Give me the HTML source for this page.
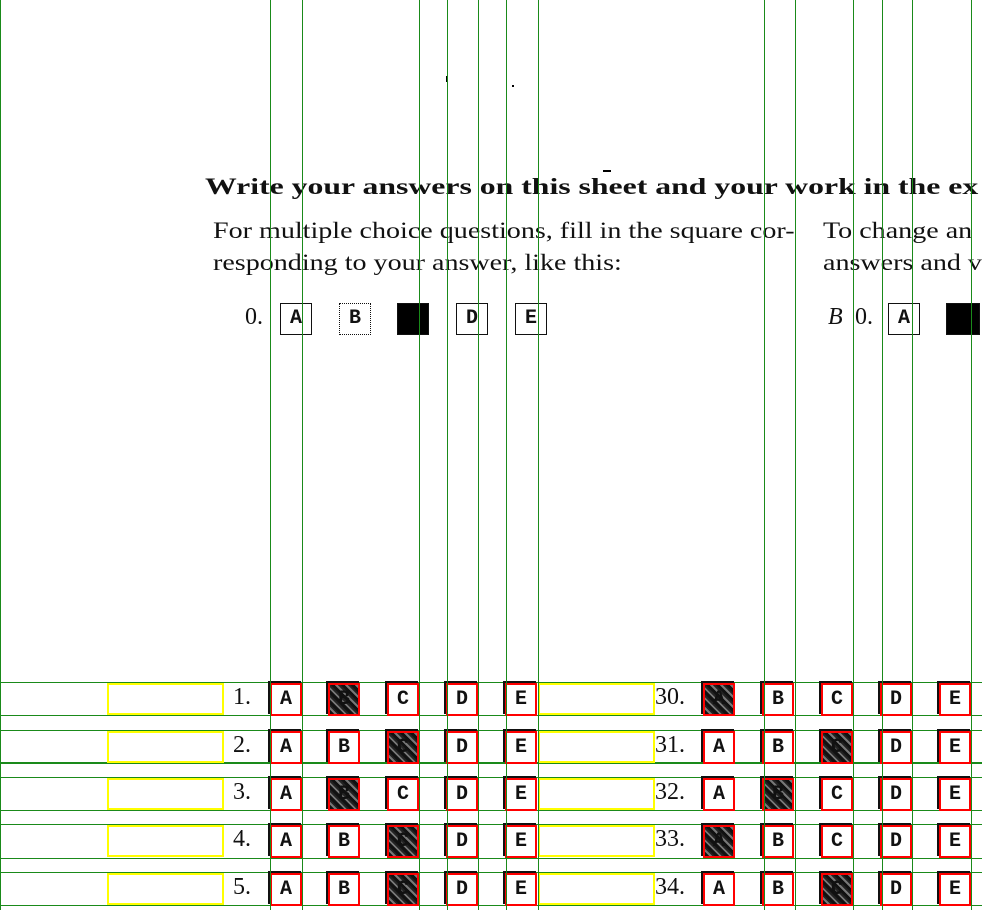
<!DOCTYPE html>
<html><head><meta charset="utf-8"><style>
body{margin:0;width:982px;height:910px;background:#fff;position:relative;overflow:hidden;font-family:"Liberation Serif",serif;}
div{position:absolute;box-sizing:border-box;}
.v{width:1px;top:0;height:910px;background:#1a8a1a;}
.h{height:1px;left:0;width:982px;background:#1a8a1a;}
.t{white-space:nowrap;color:#111;}
.s{transform-origin:0 0;}
.bx{width:32px;height:32px;border:1.5px solid #111;font-family:"Liberation Mono",monospace;font-size:20px;font-weight:bold;text-align:center;line-height:29px;color:#111;}
.sh{width:33px;height:33px;border:2px solid #111;border-top-width:3px;border-bottom-width:3px;}
.r{width:32px;height:33px;border:2px solid #f00;font-family:"Liberation Mono",monospace;font-size:20px;font-weight:bold;text-align:center;line-height:29px;color:#111;}
.f{background:repeating-linear-gradient(45deg,#111 0 3px,#777 3px 5px,#222 5px 7px);}
.y{border:2px solid #ffff00;width:117px;height:32px;}
.n{font-size:24px;color:#111;}
#clip{left:0;top:0;width:982px;height:910px;overflow:hidden;}
</style></head><body>
<div id="clip">
<div class="t" style="left:446px;top:76px;width:2px;height:6px;background:#000"></div>
<div class="t" style="left:512px;top:85px;width:2px;height:2px;background:#000"></div>
<div class="t" style="left:603px;top:170px;width:8px;height:2px;background:#000"></div>

<div class="t s" style="left:205px;top:174px;font-size:23px;font-weight:bold;transform:scaleX(1.38);">Write your answers on this sheet and your work in the ex</div>
<div class="t s" style="left:213px;top:218px;font-size:23px;transform:scaleX(1.22);">For multiple choice questions, fill in the square cor-</div>
<div class="t s" style="left:213px;top:250px;font-size:23px;transform:scaleX(1.22);">responding to your answer, like this:</div>
<div class="t s" style="left:823px;top:218px;font-size:23px;transform:scaleX(1.22);">To change an</div>
<div class="t s" style="left:823px;top:250px;font-size:23px;transform:scaleX(1.22);">answers and v</div>

<div class="t" style="left:245px;top:304px;font-size:24px;">0.</div>
<div class="bx" style="left:280px;top:303px;">A</div>
<div class="bx" style="left:339px;top:303px;border-style:dotted;">B</div>
<div class="bx" style="left:397px;top:303px;background:#000;"></div>
<div class="bx" style="left:456px;top:303px;">D</div>
<div class="bx" style="left:515px;top:303px;">E</div>
<div class="t" style="left:828px;top:304px;font-size:24px;font-style:italic;">B</div>
<div class="t" style="left:855px;top:304px;font-size:24px;">0.</div>
<div class="bx" style="left:888px;top:303px;">A</div>
<div class="bx" style="left:946px;top:303px;width:34px;background:#000;"></div>

<div class="h" style="top:682px"></div><div class="h" style="top:715px"></div>
<div class="h" style="top:730px"></div><div class="h" style="top:762px;height:2px"></div>
<div class="h" style="top:777px"></div><div class="h" style="top:810px"></div>
<div class="h" style="top:824px"></div><div class="h" style="top:858px"></div>
<div class="h" style="top:872px"></div><div class="h" style="top:905px"></div>

<div id="rows"></div>
<div class="v" style="left:0"></div>
<div class="v" style="left:270px"></div><div class="v" style="left:302px"></div>
<div class="v" style="left:419px"></div><div class="v" style="left:447px"></div>
<div class="v" style="left:478px"></div><div class="v" style="left:506px"></div>
<div class="v" style="left:538px"></div><div class="v" style="left:764px"></div>
<div class="v" style="left:795px"></div><div class="v" style="left:853px"></div>
<div class="v" style="left:882px"></div><div class="v" style="left:912px"></div>
<div class="v" style="left:971px"></div>
</div>
<script>
var tops=[683,731,778,825,873];
var L=[["1.","B"],["2.","C"],["3.","B"],["4.","C"],["5.","C"]];
var R=[["30.","A"],["31.","C"],["32.","B"],["33.","A"],["34.","C"]];
var lx=[270,328,387,446,505], rx=[703,762,821,880,939], letters="ABCDE";
var h="";
for(var i=0;i<5;i++){
 var y=tops[i];
 h+='<div class="y" style="left:107px;top:'+y+'px"></div>';
 h+='<div class="y" style="left:538px;top:'+y+'px"></div>';
 h+='<div class="t n" style="left:233px;top:'+(y+1)+'px">'+L[i][0]+'</div>';
 h+='<div class="t n" style="left:655px;top:'+(y+1)+'px">'+R[i][0]+'</div>';
 for(var j=0;j<5;j++){
  [[lx[j],L[i][1]],[rx[j],R[i][1]]].forEach(function(p){
   var f=letters[j]==p[1];
   h+='<div class="sh" style="left:'+(p[0]-2)+'px;top:'+(y-2)+'px"></div>';
   h+='<div class="r'+(f?' f':'')+'" style="left:'+p[0]+'px;top:'+y+'px;background-color:#fff">'+letters[j]+'</div>';
  });
 }
}
document.getElementById("rows").outerHTML=h;
</script>
</body></html>
